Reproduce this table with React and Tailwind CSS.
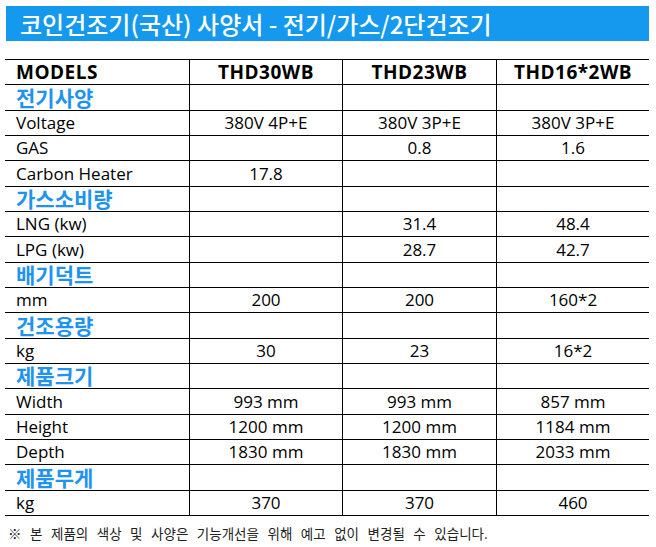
import React from "react";

const rows = [
  { type: "head", cells: ["MODELS", "THD30WB", "THD23WB", "THD16*2WB"] },
  { type: "sec", cells: ["전기사양"] },
  { cells: ["Voltage", "380V 4P+E", "380V 3P+E", "380V 3P+E"] },
  { cells: ["GAS", "", "0.8", "1.6"] },
  { cells: ["Carbon Heater", "17.8", "", ""] },
  { type: "sec", cells: ["가스소비량"] },
  { cells: ["LNG (kw)", "", "31.4", "48.4"] },
  { cells: ["LPG (kw)", "", "28.7", "42.7"] },
  { type: "sec", cells: ["배기덕트"] },
  { cells: ["mm", "200", "200", "160*2"] },
  { type: "sec", cells: ["건조용량"] },
  { cells: ["kg", "30", "23", "16*2"] },
  { type: "sec", cells: ["제품크기"] },
  { cells: ["Width", "993 mm", "993 mm", "857 mm"] },
  { cells: ["Height", "1200 mm", "1200 mm", "1184 mm"] },
  { cells: ["Depth", "1830 mm", "1830 mm", "2033 mm"] },
  { type: "sec", cells: ["제품무게"] },
  { cells: ["kg", "370", "370", "460"] },
];

const heights = ["h-[25px]", "h-[26px]", "h-[25px]"];

function HeadText({ children }) {
  return (
    <span className="text-[19px] font-bold tracking-[0.5px] text-black leading-none font-['Open_Sans','Noto_Sans_CJK_KR',sans-serif]">
      {children}
    </span>
  );
}

function Val({ children }) {
  return (
    <span className="text-[17px] text-black leading-[22px] font-['Open_Sans','Noto_Sans_CJK_KR',sans-serif]">
      {children}
    </span>
  );
}

function Row({ row, i }) {
  const h = heights[i % 3];
  const c = row.cells;
  const vals = [c[1] || "", c[2] || "", c[3] || ""];
  let first;
  if (row.type === "head") {
    first = <HeadText>{c[0]}</HeadText>;
  } else if (row.type === "sec") {
    first = (
      <span className="text-[21px] font-bold text-[#1e93f0] leading-[22px] pb-[2px] font-['Noto_Sans_CJK_KR','Open_Sans',sans-serif]">
        {c[0]}
      </span>
    );
  } else {
    first = <Val>{c[0]}</Val>;
  }
  return (
    <div className={`flex ${h} border-b border-black`}>
      <div className="w-[184px] flex items-center pl-[11px]">{first}</div>
      {vals.map((v, k) => (
        <div
          key={k}
          className={`${k === 1 ? "w-[154px]" : "w-[153px]"} border-l border-black flex items-center justify-center`}
        >
          {row.type === "head" ? <HeadText>{v}</HeadText> : <Val>{v}</Val>}
        </div>
      ))}
    </div>
  );
}

export default function App() {
  return (
    <div className="w-[656px] h-[547px] bg-white overflow-hidden">
      <div className="pt-[6px] pl-[6px]">
        <div className="w-[643px] h-[35px] bg-[#1599ee] flex items-center pl-[14px] text-white text-[24px] font-medium font-['Noto_Sans_CJK_KR','Open_Sans',sans-serif]">
          코인건조기(국산) 사양서 - 전기/가스/2단건조기
        </div>
      </div>
      <div className="mt-[18px] ml-[5px] w-[644px] border-t border-black">
        {rows.map((r, i) => (
          <Row key={i} row={r} i={i} />
        ))}
      </div>
      <div className="mt-[7px] pl-[8px] text-[13.5px] text-[#222] [word-spacing:5.5px] font-['Noto_Sans_CJK_KR','Open_Sans',sans-serif]">
        ※ 본 제품의 색상 및 사양은 기능개선을 위해 예고 없이 변경될 수 있습니다.
      </div>
    </div>
  );
}
